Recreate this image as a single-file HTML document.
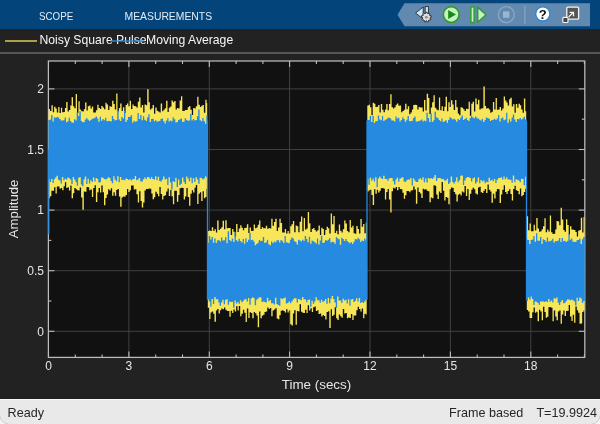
<!DOCTYPE html>
<html><head><meta charset="utf-8"><title>Scope</title>
<style>
html,body{margin:0;padding:0;background:#222;}
body{width:600px;height:424px;overflow:hidden;position:relative;font-family:"Liberation Sans",sans-serif;}
#tb{position:absolute;left:0;top:0;width:600px;height:29.5px;background:#03447a;}
#tb span{position:absolute;top:9px;font-size:12px;line-height:14px;color:#e3ebf3;letter-spacing:0px;}
#main{position:absolute;left:0;top:29px;width:600px;height:370px;background:#222222;}
#sb{position:absolute;left:0;top:399px;width:600px;height:25px;background:#e9e9e9;border-top:1px solid #f6f6f6;box-sizing:border-box;}
#sb span{position:absolute;top:6px;font-size:12.6px;line-height:15px;color:#262626;white-space:nowrap;}
svg{position:absolute;left:0;top:0;will-change:transform;}
#sb{will-change:transform;}
svg text{font-family:"Liberation Sans",sans-serif;}
</style></head><body>
<div id="tb"></div>
<div id="main"></div>
<div id="sb"><span style="left:7.6px">Ready</span><span style="left:449px">Frame based</span><span style="left:536.4px">T=19.9924</span></div>
<svg width="600" height="424" viewBox="0 0 600 424">
<text x="39" y="20.2" font-size="11.6" fill="#e6edf5" textLength="34.2" lengthAdjust="spacingAndGlyphs">SCOPE</text>
<text x="124.5" y="20.2" font-size="11.6" fill="#e6edf5" textLength="87.6" lengthAdjust="spacingAndGlyphs">MEASUREMENTS</text>
<!-- toolbar right group -->
<polygon points="397.5,14.7 404.5,3.3 590,3.3 590,26.2 404.5,26.2" fill="#628ab0"/>
<g id="ic1">
<polygon points="415.6,13 423.2,7 423.2,19" fill="#cde6fb" stroke="#2b2b2b" stroke-width="0.9" stroke-linejoin="round"/>
<rect x="425.2" y="6.6" width="3.2" height="8" fill="#cde6fb" stroke="#2b2b2b" stroke-width="0.9"/>
<path d="M425.64 12.26L427.16 12.26L427.17 13.58L428.14 13.93L428.99 12.92L430.16 13.91L429.32 14.92L429.83 15.81L431.13 15.59L431.40 17.10L430.10 17.33L429.92 18.34L431.06 19.01L430.30 20.33L429.15 19.68L428.36 20.34L428.81 21.58L427.37 22.10L426.91 20.86L425.89 20.86L425.43 22.10L423.99 21.58L424.44 20.34L423.65 19.68L422.50 20.33L421.74 19.01L422.88 18.34L422.70 17.33L421.40 17.10L421.67 15.59L422.97 15.81L423.48 14.92L422.64 13.91L423.81 12.92L424.66 13.93L425.63 13.58Z" fill="#f1f1f1" stroke="#2b2b2b" stroke-width="0.9" stroke-linejoin="round"/>
<circle cx="426.4" cy="17.2" r="1.5" fill="#8e8e8e"/>
<circle cx="426.4" cy="17.2" r="2.3" fill="none" stroke="#d0d0d0" stroke-width="0.8"/>
</g>
<g id="play">
<circle cx="451.2" cy="14.6" r="7.9" fill="#c9f0c3" stroke="#2d9c2d" stroke-width="1.7"/>
<polygon points="448.2,10.1 456,14.6 448.2,19.1" fill="#168a16"/>
</g>
<g id="step">
<rect x="470.9" y="6.9" width="3.2" height="15.6" fill="#c9f0c3" stroke="#2d9c2d" stroke-width="1.4"/>
<polygon points="477.7,7.1 486,14.7 477.7,22.3" fill="#c9f0c3" stroke="#2d9c2d" stroke-width="1.5" stroke-linejoin="round"/>
</g>
<g id="stop">
<circle cx="506.3" cy="14.6" r="8" fill="none" stroke="#8ca7c5" stroke-width="1.3"/>
<rect x="503" y="11.4" width="6.4" height="6.4" fill="#9db5cf"/>
</g>
<line x1="524.9" y1="5.5" x2="524.9" y2="24" stroke="#9aa9ba" stroke-width="1"/>
<g id="help">
<circle cx="542.8" cy="13.9" r="7.1" fill="#fff" stroke="#2b84d6" stroke-width="1.3"/>
<text x="542.8" y="18.7" text-anchor="middle" font-size="13" font-weight="bold" fill="#111" style="text-rendering:geometricPrecision">?</text>
</g>
<g id="undock">
<rect x="566.8" y="7.1" width="11.8" height="12.1" rx="1" fill="#555555" stroke="#f2f2f2" stroke-width="1.3"/>
<path d="M568.6 17 L573.2 12.4 M569.6 12.4 L573.5 12.4 L573.5 16.3" fill="none" stroke="#f5f5f5" stroke-width="1.3"/>
<rect x="562.8" y="17.3" width="5.2" height="5.2" rx="1" fill="#454545" stroke="#f2f2f2" stroke-width="1.2"/>
</g>
<!-- legend -->
<line x1="5" y1="41" x2="37" y2="41" stroke="#f8e65a" stroke-width="1.3"/>
<text x="39.5" y="44.4" font-size="12.2" fill="#f6f6f6">Noisy Square Pulse</text>
<text x="146" y="44.4" font-size="12.2" fill="#f6f6f6">Moving Average</text>
<line x1="110.5" y1="41" x2="144.5" y2="41" stroke="#2a8de2" stroke-width="1.3" opacity="0.9"/>
<line x1="0" y1="53" x2="600" y2="53" stroke="#8a8a8a" stroke-width="1"/>
<!-- axes -->
<rect x="48.4" y="61.0" width="536.4" height="296.4" fill="#111111"/>
<g stroke="#404040" stroke-width="1"><line x1="128.9" y1="61.0" x2="128.9" y2="357.4"/><line x1="209.3" y1="61.0" x2="209.3" y2="357.4"/><line x1="289.6" y1="61.0" x2="289.6" y2="357.4"/><line x1="370.0" y1="61.0" x2="370.0" y2="357.4"/><line x1="450.4" y1="61.0" x2="450.4" y2="357.4"/><line x1="530.8" y1="61.0" x2="530.8" y2="357.4"/><line x1="48.4" y1="331.3" x2="584.8" y2="331.3"/><line x1="48.4" y1="270.7" x2="584.8" y2="270.7"/><line x1="48.4" y1="210.1" x2="584.8" y2="210.1"/><line x1="48.4" y1="149.5" x2="584.8" y2="149.5"/><line x1="48.4" y1="88.9" x2="584.8" y2="88.9"/></g>
<rect x="48.4" y="61.0" width="536.4" height="296.4" fill="none" stroke="#bdbdbd" stroke-width="1.25"/>
<g stroke="#bdbdbd" stroke-width="1.1"><line x1="48.5" y1="357.4" x2="48.5" y2="351.4"/><line x1="48.5" y1="61.0" x2="48.5" y2="67.0"/><line x1="75.3" y1="357.4" x2="75.3" y2="354.4"/><line x1="75.3" y1="61.0" x2="75.3" y2="64.0"/><line x1="102.1" y1="357.4" x2="102.1" y2="354.4"/><line x1="102.1" y1="61.0" x2="102.1" y2="64.0"/><line x1="128.9" y1="357.4" x2="128.9" y2="351.4"/><line x1="128.9" y1="61.0" x2="128.9" y2="67.0"/><line x1="155.7" y1="357.4" x2="155.7" y2="354.4"/><line x1="155.7" y1="61.0" x2="155.7" y2="64.0"/><line x1="182.5" y1="357.4" x2="182.5" y2="354.4"/><line x1="182.5" y1="61.0" x2="182.5" y2="64.0"/><line x1="209.3" y1="357.4" x2="209.3" y2="351.4"/><line x1="209.3" y1="61.0" x2="209.3" y2="67.0"/><line x1="236.1" y1="357.4" x2="236.1" y2="354.4"/><line x1="236.1" y1="61.0" x2="236.1" y2="64.0"/><line x1="262.9" y1="357.4" x2="262.9" y2="354.4"/><line x1="262.9" y1="61.0" x2="262.9" y2="64.0"/><line x1="289.6" y1="357.4" x2="289.6" y2="351.4"/><line x1="289.6" y1="61.0" x2="289.6" y2="67.0"/><line x1="316.4" y1="357.4" x2="316.4" y2="354.4"/><line x1="316.4" y1="61.0" x2="316.4" y2="64.0"/><line x1="343.2" y1="357.4" x2="343.2" y2="354.4"/><line x1="343.2" y1="61.0" x2="343.2" y2="64.0"/><line x1="370.0" y1="357.4" x2="370.0" y2="351.4"/><line x1="370.0" y1="61.0" x2="370.0" y2="67.0"/><line x1="396.8" y1="357.4" x2="396.8" y2="354.4"/><line x1="396.8" y1="61.0" x2="396.8" y2="64.0"/><line x1="423.6" y1="357.4" x2="423.6" y2="354.4"/><line x1="423.6" y1="61.0" x2="423.6" y2="64.0"/><line x1="450.4" y1="357.4" x2="450.4" y2="351.4"/><line x1="450.4" y1="61.0" x2="450.4" y2="67.0"/><line x1="477.2" y1="357.4" x2="477.2" y2="354.4"/><line x1="477.2" y1="61.0" x2="477.2" y2="64.0"/><line x1="504.0" y1="357.4" x2="504.0" y2="354.4"/><line x1="504.0" y1="61.0" x2="504.0" y2="64.0"/><line x1="530.8" y1="357.4" x2="530.8" y2="351.4"/><line x1="530.8" y1="61.0" x2="530.8" y2="67.0"/><line x1="557.6" y1="357.4" x2="557.6" y2="354.4"/><line x1="557.6" y1="61.0" x2="557.6" y2="64.0"/><line x1="584.4" y1="357.4" x2="584.4" y2="354.4"/><line x1="584.4" y1="61.0" x2="584.4" y2="64.0"/><line x1="48.4" y1="331.3" x2="54.4" y2="331.3"/><line x1="584.8" y1="331.3" x2="578.8" y2="331.3"/><line x1="48.4" y1="301.0" x2="51.4" y2="301.0"/><line x1="584.8" y1="301.0" x2="581.8" y2="301.0"/><line x1="48.4" y1="270.7" x2="54.4" y2="270.7"/><line x1="584.8" y1="270.7" x2="578.8" y2="270.7"/><line x1="48.4" y1="240.4" x2="51.4" y2="240.4"/><line x1="584.8" y1="240.4" x2="581.8" y2="240.4"/><line x1="48.4" y1="210.1" x2="54.4" y2="210.1"/><line x1="584.8" y1="210.1" x2="578.8" y2="210.1"/><line x1="48.4" y1="179.8" x2="51.4" y2="179.8"/><line x1="584.8" y1="179.8" x2="581.8" y2="179.8"/><line x1="48.4" y1="149.5" x2="54.4" y2="149.5"/><line x1="584.8" y1="149.5" x2="578.8" y2="149.5"/><line x1="48.4" y1="119.2" x2="51.4" y2="119.2"/><line x1="584.8" y1="119.2" x2="581.8" y2="119.2"/><line x1="48.4" y1="88.9" x2="54.4" y2="88.9"/><line x1="584.8" y1="88.9" x2="578.8" y2="88.9"/></g>
<path d="M48.7 149.5L48.7 109.0L50.0 109.0L50.0 111.0L51.4 111.0L51.4 105.3L52.8 105.3L52.8 112.3L54.1 112.3L54.1 106.7L55.5 106.7L55.5 108.6L56.8 108.6L56.8 112.6L58.2 112.6L58.2 107.0L59.5 107.0L59.5 113.1L60.9 113.1L60.9 107.8L62.2 107.8L62.2 112.3L63.6 112.3L63.6 111.9L64.9 111.9L64.9 107.9L66.2 107.9L66.2 102.1L67.6 102.1L67.6 111.4L68.9 111.4L68.9 110.1L70.3 110.1L70.3 105.6L71.6 105.6L71.6 97.2L73.0 97.2L73.0 106.2L74.3 106.2L74.3 108.2L75.7 108.2L75.7 94.1L77.0 94.1L77.0 112.9L78.4 112.9L78.4 101.2L79.7 101.2L79.7 109.4L81.1 109.4L81.1 111.1L82.4 111.1L82.4 111.5L83.8 111.5L83.8 109.2L85.1 109.2L85.1 102.4L86.5 102.4L86.5 110.6L87.8 110.6L87.8 106.2L89.2 106.2L89.2 105.4L90.5 105.4L90.5 108.5L91.9 108.5L91.9 106.6L93.2 106.6L93.2 112.5L94.6 112.5L94.6 112.6L95.9 112.6L95.9 110.3L97.3 110.3L97.3 104.8L98.6 104.8L98.6 107.9L100.0 107.9L100.0 109.1L101.3 109.1L101.3 106.1L102.7 106.1L102.7 107.6L104.0 107.6L104.0 109.3L105.4 109.3L105.4 102.8L106.7 102.8L106.7 104.6L108.1 104.6L108.1 109.9L109.4 109.9L109.4 106.2L110.8 106.2L110.8 106.8L112.1 106.8L112.1 100.7L113.5 100.7L113.5 104.1L114.8 104.1L114.8 109.4L116.2 109.4L116.2 93.4L117.5 93.4L117.5 111.5L118.9 111.5L118.9 108.0L120.2 108.0L120.2 103.6L121.6 103.6L121.6 111.0L122.9 111.0L122.9 107.2L124.3 107.2L124.3 113.1L125.6 113.1L125.6 105.0L127.0 105.0L127.0 103.4L128.3 103.4L128.3 106.3L129.7 106.3L129.7 100.7L131.0 100.7L131.0 109.1L132.4 109.1L132.4 104.6L133.7 104.6L133.7 106.0L135.1 106.0L135.1 106.2L136.4 106.2L136.4 107.6L137.8 107.6L137.8 101.8L139.1 101.8L139.1 97.4L140.5 97.4L140.5 107.4L141.8 107.4L141.8 105.1L143.2 105.1L143.2 112.5L144.5 112.5L144.5 104.5L145.9 104.5L145.9 105.3L147.2 105.3L147.2 89.3L148.6 89.3L148.6 102.2L149.9 102.2L149.9 109.4L151.3 109.4L151.3 108.3L152.6 108.3L152.6 105.0L154.0 105.0L154.0 113.7L155.3 113.7L155.3 107.5L156.7 107.5L156.7 110.8L158.0 110.8L158.0 111.5L159.4 111.5L159.4 112.6L160.7 112.6L160.7 103.4L162.1 103.4L162.1 111.3L163.4 111.3L163.4 109.8L164.8 109.8L164.8 108.3L166.1 108.3L166.1 100.8L167.5 100.8L167.5 112.1L168.8 112.1L168.8 107.7L170.2 107.7L170.2 106.5L171.5 106.5L171.5 100.4L172.9 100.4L172.9 102.3L174.2 102.3L174.2 101.1L175.6 101.1L175.6 109.5L176.9 109.5L176.9 108.0L178.3 108.0L178.3 108.6L179.6 108.6L179.6 100.4L181.0 100.4L181.0 96.3L182.3 96.3L182.3 111.0L183.7 111.0L183.7 110.7L185.0 110.7L185.0 110.0L186.4 110.0L186.4 110.0L187.7 110.0L187.7 107.3L189.1 107.3L189.1 106.1L190.4 106.1L190.4 109.7L191.8 109.7L191.8 115.1L193.1 115.1L193.1 108.0L194.5 108.0L194.5 108.5L195.8 108.5L195.8 106.3L197.2 106.3L197.2 96.8L198.5 96.8L198.5 104.7L199.9 104.7L199.9 106.9L201.2 106.9L201.2 105.7L202.6 105.7L202.6 104.9L203.9 104.9L203.9 112.7L205.3 112.7L205.3 99.8L206.6 99.8L206.6 103.1L207.2 103.1L207.2 149.5L207.2 188.8L206.6 188.8L206.6 196.9L205.3 196.9L205.3 198.2L203.9 198.2L203.9 191.2L202.6 191.2L202.6 200.9L201.2 200.9L201.2 192.2L199.9 192.2L199.9 193.7L198.5 193.7L198.5 204.1L197.2 204.1L197.2 184.9L195.8 184.9L195.8 187.7L194.5 187.7L194.5 192.4L193.1 192.4L193.1 190.3L191.8 190.3L191.8 193.8L190.4 193.8L190.4 205.7L189.1 205.7L189.1 196.9L187.7 196.9L187.7 187.9L186.4 187.9L186.4 196.4L185.0 196.4L185.0 199.4L183.7 199.4L183.7 188.0L182.3 188.0L182.3 187.7L181.0 187.7L181.0 188.2L179.6 188.2L179.6 194.9L178.3 194.9L178.3 201.7L176.9 201.7L176.9 190.8L175.6 190.8L175.6 190.8L174.2 190.8L174.2 204.2L172.9 204.2L172.9 196.3L171.5 196.3L171.5 190.1L170.2 190.1L170.2 196.1L168.8 196.1L168.8 188.4L167.5 188.4L167.5 191.6L166.1 191.6L166.1 195.3L164.8 195.3L164.8 195.9L163.4 195.9L163.4 199.6L162.1 199.6L162.1 193.9L160.7 193.9L160.7 187.0L159.4 187.0L159.4 196.3L158.0 196.3L158.0 193.8L156.7 193.8L156.7 191.7L155.3 191.7L155.3 197.3L154.0 197.3L154.0 199.2L152.6 199.2L152.6 193.4L151.3 193.4L151.3 188.7L149.9 188.7L149.9 188.6L148.6 188.6L148.6 188.9L147.2 188.9L147.2 188.9L145.9 188.9L145.9 190.4L144.5 190.4L144.5 202.4L143.2 202.4L143.2 207.6L141.8 207.6L141.8 201.1L140.5 201.1L140.5 191.3L139.1 191.3L139.1 202.5L137.8 202.5L137.8 194.3L136.4 194.3L136.4 189.3L135.1 189.3L135.1 189.5L133.7 189.5L133.7 185.5L132.4 185.5L132.4 185.6L131.0 185.6L131.0 190.3L129.7 190.3L129.7 192.1L128.3 192.1L128.3 188.9L127.0 188.9L127.0 195.1L125.6 195.1L125.6 196.7L124.3 196.7L124.3 196.4L122.9 196.4L122.9 197.6L121.6 197.6L121.6 206.7L120.2 206.7L120.2 196.5L118.9 196.5L118.9 188.9L117.5 188.9L117.5 190.1L116.2 190.1L116.2 195.8L114.8 195.8L114.8 192.3L113.5 192.3L113.5 195.7L112.1 195.7L112.1 188.2L110.8 188.2L110.8 190.5L109.4 190.5L109.4 189.3L108.1 189.3L108.1 194.4L106.7 194.4L106.7 197.9L105.4 197.9L105.4 205.3L104.0 205.3L104.0 192.2L102.7 192.2L102.7 185.5L101.3 185.5L101.3 192.4L100.0 192.4L100.0 187.9L98.6 187.9L98.6 192.2L97.3 192.2L97.3 202.1L95.9 202.1L95.9 185.3L94.6 185.3L94.6 188.1L93.2 188.1L93.2 197.0L91.9 197.0L91.9 189.4L90.5 189.4L90.5 190.2L89.2 190.2L89.2 187.3L87.8 187.3L87.8 187.0L86.5 187.0L86.5 191.7L85.1 191.7L85.1 191.5L83.8 191.5L83.8 209.8L82.4 209.8L82.4 197.5L81.1 197.5L81.1 187.6L79.7 187.6L79.7 190.4L78.4 190.4L78.4 190.2L77.0 190.2L77.0 189.2L75.7 189.2L75.7 188.0L74.3 188.0L74.3 193.3L73.0 193.3L73.0 198.3L71.6 198.3L71.6 185.4L70.3 185.4L70.3 190.4L68.9 190.4L68.9 187.3L67.6 187.3L67.6 188.0L66.2 188.0L66.2 182.2L64.9 182.2L64.9 186.3L63.6 186.3L63.6 190.2L62.2 190.2L62.2 188.1L60.9 188.1L60.9 188.7L59.5 188.7L59.5 186.6L58.2 186.6L58.2 186.5L56.8 186.5L56.8 193.5L55.5 193.5L55.5 187.3L54.1 187.3L54.1 190.8L52.8 190.8L52.8 190.7L51.4 190.7L51.4 196.2L50.0 196.2L50.0 198.3L48.7 198.3ZM207.8 270.7L207.8 231.0L209.2 231.0L209.2 230.5L210.5 230.5L210.5 231.1L211.8 231.1L211.8 227.3L213.2 227.3L213.2 230.9L214.5 230.9L214.5 229.2L215.9 229.2L215.9 232.5L217.2 232.5L217.2 220.6L218.6 220.6L218.6 229.9L219.9 229.9L219.9 228.8L221.3 228.8L221.3 227.3L222.6 227.3L222.6 220.8L224.0 220.8L224.0 229.2L225.3 229.2L225.3 220.2L226.7 220.2L226.7 228.3L228.0 228.3L228.0 228.0L229.4 228.0L229.4 228.0L230.7 228.0L230.7 235.1L232.1 235.1L232.1 229.0L233.4 229.0L233.4 231.8L234.8 231.8L234.8 236.4L236.1 236.4L236.1 223.9L237.5 223.9L237.5 231.9L238.8 231.9L238.8 228.6L240.2 228.6L240.2 225.3L241.5 225.3L241.5 227.7L242.9 227.7L242.9 230.2L244.2 230.2L244.2 228.1L245.6 228.1L245.6 227.7L246.9 227.7L246.9 224.2L248.3 224.2L248.3 232.9L249.6 232.9L249.6 227.6L251.0 227.6L251.0 231.0L252.3 231.0L252.3 230.7L253.7 230.7L253.7 224.5L255.0 224.5L255.0 228.2L256.4 228.2L256.4 227.6L257.7 227.6L257.7 224.7L259.1 224.7L259.1 220.5L260.4 220.5L260.4 228.9L261.8 228.9L261.8 227.0L263.1 227.0L263.1 228.3L264.5 228.3L264.5 228.2L265.8 228.2L265.8 225.8L267.2 225.8L267.2 228.8L268.6 228.8L268.6 227.9L269.9 227.9L269.9 228.6L271.3 228.6L271.3 218.8L272.6 218.8L272.6 225.7L274.0 225.7L274.0 221.9L275.3 221.9L275.3 218.8L276.7 218.8L276.7 230.9L278.0 230.9L278.0 227.6L279.4 227.6L279.4 218.7L280.7 218.7L280.7 223.0L282.1 223.0L282.1 232.4L283.4 232.4L283.4 232.6L284.8 232.6L284.8 228.9L286.1 228.9L286.1 233.5L287.5 233.5L287.5 231.1L288.8 231.1L288.8 233.5L290.2 233.5L290.2 226.2L291.5 226.2L291.5 224.3L292.9 224.3L292.9 221.1L294.2 221.1L294.2 232.2L295.6 232.2L295.6 225.5L296.9 225.5L296.9 226.3L298.3 226.3L298.3 232.3L299.6 232.3L299.6 221.7L301.0 221.7L301.0 216.5L302.3 216.5L302.3 231.3L303.7 231.3L303.7 218.0L305.0 218.0L305.0 229.4L306.4 229.4L306.4 228.5L307.7 228.5L307.7 211.9L309.1 211.9L309.1 223.2L310.4 223.2L310.4 232.1L311.8 232.1L311.8 229.1L313.1 229.1L313.1 228.1L314.5 228.1L314.5 230.0L315.8 230.0L315.8 231.6L317.2 231.6L317.2 230.3L318.5 230.3L318.5 225.4L319.9 225.4L319.9 235.1L321.2 235.1L321.2 227.7L322.6 227.7L322.6 229.0L323.9 229.0L323.9 235.1L325.3 235.1L325.3 230.1L326.6 230.1L326.6 226.8L328.0 226.8L328.0 228.2L329.3 228.2L329.3 233.6L330.7 233.6L330.7 213.5L332.0 213.5L332.0 224.2L333.4 224.2L333.4 216.0L334.7 216.0L334.7 232.9L336.1 232.9L336.1 230.8L337.4 230.8L337.4 234.3L338.8 234.3L338.8 224.4L340.1 224.4L340.1 230.8L341.5 230.8L341.5 232.5L342.8 232.5L342.8 229.2L344.2 229.2L344.2 220.5L345.5 220.5L345.5 223.5L346.9 223.5L346.9 230.9L348.2 230.9L348.2 232.2L349.6 232.2L349.6 220.1L350.9 220.1L350.9 227.5L352.3 227.5L352.3 225.7L353.6 225.7L353.6 233.2L355.0 233.2L355.0 233.8L356.3 233.8L356.3 225.9L357.7 225.9L357.7 229.1L359.0 229.1L359.0 233.5L360.4 233.5L360.4 219.1L361.7 219.1L361.7 226.7L363.1 226.7L363.1 223.9L364.4 223.9L364.4 233.3L365.8 233.3L365.8 222.5L366.7 222.5L366.7 270.7L366.7 314.6L365.8 314.6L365.8 313.8L364.4 313.8L364.4 318.3L363.1 318.3L363.1 308.5L361.7 308.5L361.7 311.6L360.4 311.6L360.4 308.9L359.0 308.9L359.0 306.8L357.7 306.8L357.7 310.2L356.3 310.2L356.3 315.6L355.0 315.6L355.0 315.4L353.6 315.4L353.6 320.1L352.3 320.1L352.3 314.1L350.9 314.1L350.9 318.1L349.6 318.1L349.6 317.6L348.2 317.6L348.2 318.3L346.9 318.3L346.9 313.1L345.5 313.1L345.5 313.4L344.2 313.4L344.2 309.0L342.8 309.0L342.8 317.8L341.5 317.8L341.5 316.2L340.1 316.2L340.1 314.6L338.8 314.6L338.8 320.1L337.4 320.1L337.4 318.3L336.1 318.3L336.1 307.2L334.7 307.2L334.7 314.8L333.4 314.8L333.4 316.1L332.0 316.1L332.0 309.2L330.7 309.2L330.7 327.9L329.3 327.9L329.3 311.2L328.0 311.2L328.0 311.9L326.6 311.9L326.6 319.6L325.3 319.6L325.3 315.9L323.9 315.9L323.9 315.0L322.6 315.0L322.6 316.5L321.2 316.5L321.2 313.4L319.9 313.4L319.9 314.1L318.5 314.1L318.5 310.2L317.2 310.2L317.2 311.0L315.8 311.0L315.8 306.5L314.5 306.5L314.5 307.2L313.1 307.2L313.1 312.0L311.8 312.0L311.8 308.3L310.4 308.3L310.4 310.6L309.1 310.6L309.1 305.2L307.7 305.2L307.7 313.1L306.4 313.1L306.4 309.8L305.0 309.8L305.0 313.1L303.7 313.1L303.7 312.8L302.3 312.8L302.3 311.8L301.0 311.8L301.0 304.2L299.6 304.2L299.6 311.5L298.3 311.5L298.3 311.0L296.9 311.0L296.9 324.7L295.6 324.7L295.6 310.3L294.2 310.3L294.2 313.6L292.9 313.6L292.9 325.6L291.5 325.6L291.5 324.3L290.2 324.3L290.2 310.5L288.8 310.5L288.8 312.5L287.5 312.5L287.5 309.3L286.1 309.3L286.1 312.6L284.8 312.6L284.8 310.9L283.4 310.9L283.4 310.3L282.1 310.3L282.1 310.8L280.7 310.8L280.7 315.2L279.4 315.2L279.4 319.3L278.0 319.3L278.0 318.5L276.7 318.5L276.7 308.2L275.3 308.2L275.3 309.4L274.0 309.4L274.0 310.5L272.6 310.5L272.6 316.3L271.3 316.3L271.3 307.9L269.9 307.9L269.9 308.9L268.6 308.9L268.6 307.5L267.2 307.5L267.2 311.5L265.8 311.5L265.8 312.1L264.5 312.1L264.5 314.7L263.1 314.7L263.1 315.8L261.8 315.8L261.8 318.2L260.4 318.2L260.4 311.4L259.1 311.4L259.1 327.3L257.7 327.3L257.7 315.5L256.4 315.5L256.4 313.2L255.0 313.2L255.0 311.9L253.7 311.9L253.7 318.3L252.3 318.3L252.3 313.0L251.0 313.0L251.0 312.3L249.6 312.3L249.6 317.9L248.3 317.9L248.3 308.5L246.9 308.5L246.9 322.1L245.6 322.1L245.6 312.8L244.2 312.8L244.2 309.7L242.9 309.7L242.9 313.7L241.5 313.7L241.5 316.2L240.2 316.2L240.2 306.1L238.8 306.1L238.8 310.4L237.5 310.4L237.5 306.3L236.1 306.3L236.1 311.4L234.8 311.4L234.8 309.5L233.4 309.5L233.4 313.1L232.1 313.1L232.1 310.8L230.7 310.8L230.7 316.7L229.4 316.7L229.4 311.0L228.0 311.0L228.0 311.1L226.7 311.1L226.7 309.8L225.3 309.8L225.3 307.4L224.0 307.4L224.0 309.3L222.6 309.3L222.6 308.6L221.3 308.6L221.3 310.3L219.9 310.3L219.9 313.4L218.6 313.4L218.6 308.9L217.2 308.9L217.2 310.6L215.9 310.6L215.9 321.7L214.5 321.7L214.5 313.7L213.2 313.7L213.2 311.4L211.8 311.4L211.8 312.6L210.5 312.6L210.5 319.1L209.2 319.1L209.2 307.8L207.8 307.8ZM367.3 149.5L367.3 105.6L368.7 105.6L368.7 104.8L370.0 104.8L370.0 107.2L371.4 107.2L371.4 115.3L372.7 115.3L372.7 102.8L374.1 102.8L374.1 103.7L375.4 103.7L375.4 107.1L376.8 107.1L376.8 106.7L378.1 106.7L378.1 105.1L379.5 105.1L379.5 112.4L380.8 112.4L380.8 103.9L382.2 103.9L382.2 109.8L383.5 109.8L383.5 112.2L384.9 112.2L384.9 109.6L386.2 109.6L386.2 104.1L387.6 104.1L387.6 110.3L388.9 110.3L388.9 103.9L390.3 103.9L390.3 94.2L391.6 94.2L391.6 107.2L393.0 107.2L393.0 108.4L394.3 108.4L394.3 107.3L395.7 107.3L395.7 104.8L397.0 104.8L397.0 103.4L398.4 103.4L398.4 105.7L399.7 105.7L399.7 105.4L401.1 105.4L401.1 112.2L402.4 112.2L402.4 111.1L403.8 111.1L403.8 109.8L405.1 109.8L405.1 103.8L406.5 103.8L406.5 109.2L407.8 109.2L407.8 106.3L409.2 106.3L409.2 114.3L410.5 114.3L410.5 112.5L411.9 112.5L411.9 109.6L413.2 109.6L413.2 105.0L414.6 105.0L414.6 104.7L415.9 104.7L415.9 104.9L417.3 104.9L417.3 109.4L418.6 109.4L418.6 106.9L420.0 106.9L420.0 107.5L421.3 107.5L421.3 107.5L422.7 107.5L422.7 111.5L424.0 111.5L424.0 100.1L425.4 100.1L425.4 110.4L426.7 110.4L426.7 93.8L428.1 93.8L428.1 98.0L429.4 98.0L429.4 114.0L430.8 114.0L430.8 107.6L432.1 107.6L432.1 102.3L433.5 102.3L433.5 95.2L434.8 95.2L434.8 107.7L436.2 107.7L436.2 109.6L437.5 109.6L437.5 110.3L438.9 110.3L438.9 97.4L440.2 97.4L440.2 110.3L441.6 110.3L441.6 106.2L442.9 106.2L442.9 111.1L444.3 111.1L444.3 106.8L445.6 106.8L445.6 96.8L447.0 96.8L447.0 111.3L448.3 111.3L448.3 102.3L449.7 102.3L449.7 107.0L451.0 107.0L451.0 100.3L452.4 100.3L452.4 104.5L453.7 104.5L453.7 110.0L455.1 110.0L455.1 99.9L456.4 99.9L456.4 107.3L457.8 107.3L457.8 113.6L459.1 113.6L459.1 115.2L460.5 115.2L460.5 107.2L461.8 107.2L461.8 107.7L463.2 107.7L463.2 109.2L464.5 109.2L464.5 111.1L465.9 111.1L465.9 108.8L467.2 108.8L467.2 109.1L468.6 109.1L468.6 101.8L469.9 101.8L469.9 115.7L471.3 115.7L471.3 103.7L472.6 103.7L472.6 101.8L474.0 101.8L474.0 111.4L475.3 111.4L475.3 98.6L476.7 98.6L476.7 104.3L478.0 104.3L478.0 99.7L479.4 99.7L479.4 109.4L480.7 109.4L480.7 108.5L482.1 108.5L482.1 108.3L483.4 108.3L483.4 86.5L484.8 86.5L484.8 106.1L486.1 106.1L486.1 108.6L487.5 108.6L487.5 107.9L488.8 107.9L488.8 109.5L490.2 109.5L490.2 112.8L491.5 112.8L491.5 111.7L492.9 111.7L492.9 101.9L494.2 101.9L494.2 109.4L495.6 109.4L495.6 98.0L496.9 98.0L496.9 109.8L498.3 109.8L498.3 109.6L499.6 109.6L499.6 107.0L501.0 107.0L501.0 110.5L502.3 110.5L502.3 108.5L503.7 108.5L503.7 96.5L505.0 96.5L505.0 100.4L506.4 100.4L506.4 102.5L507.7 102.5L507.7 105.5L509.1 105.5L509.1 99.2L510.4 99.2L510.4 97.7L511.8 97.7L511.8 106.5L513.1 106.5L513.1 104.2L514.5 104.2L514.5 112.8L515.8 112.8L515.8 104.0L517.2 104.0L517.2 107.7L518.5 107.7L518.5 103.7L519.9 103.7L519.9 105.3L521.2 105.3L521.2 109.4L522.6 109.4L522.6 112.8L523.9 112.8L523.9 98.5L525.3 98.5L525.3 111.3L526.2 111.3L526.2 149.5L526.2 188.7L525.3 188.7L525.3 191.9L523.9 191.9L523.9 195.1L522.6 195.1L522.6 196.2L521.2 196.2L521.2 188.6L519.9 188.6L519.9 194.2L518.5 194.2L518.5 191.0L517.2 191.0L517.2 190.2L515.8 190.2L515.8 185.7L514.5 185.7L514.5 188.9L513.1 188.9L513.1 200.4L511.8 200.4L511.8 194.0L510.4 194.0L510.4 189.3L509.1 189.3L509.1 191.0L507.7 191.0L507.7 194.1L506.4 194.1L506.4 191.9L505.0 191.9L505.0 185.3L503.7 185.3L503.7 189.8L502.3 189.8L502.3 194.5L501.0 194.5L501.0 202.9L499.6 202.9L499.6 189.2L498.3 189.2L498.3 189.0L496.9 189.0L496.9 191.6L495.6 191.6L495.6 198.6L494.2 198.6L494.2 193.7L492.9 193.7L492.9 202.8L491.5 202.8L491.5 191.5L490.2 191.5L490.2 189.8L488.8 189.8L488.8 184.6L487.5 184.6L487.5 193.1L486.1 193.1L486.1 188.9L484.8 188.9L484.8 190.7L483.4 190.7L483.4 192.9L482.1 192.9L482.1 192.2L480.7 192.2L480.7 186.7L479.4 186.7L479.4 187.4L478.0 187.4L478.0 194.4L476.7 194.4L476.7 193.5L475.3 193.5L475.3 189.2L474.0 189.2L474.0 187.7L472.6 187.7L472.6 189.8L471.3 189.8L471.3 193.7L469.9 193.7L469.9 200.1L468.6 200.1L468.6 189.0L467.2 189.0L467.2 195.9L465.9 195.9L465.9 185.9L464.5 185.9L464.5 192.5L463.2 192.5L463.2 191.4L461.8 191.4L461.8 195.6L460.5 195.6L460.5 193.7L459.1 193.7L459.1 194.8L457.8 194.8L457.8 201.4L456.4 201.4L456.4 194.2L455.1 194.2L455.1 192.1L453.7 192.1L453.7 188.0L452.4 188.0L452.4 187.4L451.0 187.4L451.0 189.2L449.7 189.2L449.7 204.3L448.3 204.3L448.3 197.7L447.0 197.7L447.0 196.9L445.6 196.9L445.6 200.5L444.3 200.5L444.3 190.7L442.9 190.7L442.9 182.1L441.6 182.1L441.6 192.9L440.2 192.9L440.2 191.6L438.9 191.6L438.9 199.0L437.5 199.0L437.5 194.6L436.2 194.6L436.2 185.7L434.8 185.7L434.8 185.3L433.5 185.3L433.5 198.2L432.1 198.2L432.1 197.5L430.8 197.5L430.8 202.3L429.4 202.3L429.4 191.3L428.1 191.3L428.1 190.8L426.7 190.8L426.7 189.2L425.4 189.2L425.4 189.4L424.0 189.4L424.0 188.8L422.7 188.8L422.7 197.9L421.3 197.9L421.3 193.5L420.0 193.5L420.0 191.9L418.6 191.9L418.6 187.6L417.3 187.6L417.3 203.7L415.9 203.7L415.9 189.5L414.6 189.5L414.6 186.5L413.2 186.5L413.2 190.2L411.9 190.2L411.9 190.6L410.5 190.6L410.5 192.2L409.2 192.2L409.2 191.0L407.8 191.0L407.8 190.9L406.5 190.9L406.5 195.3L405.1 195.3L405.1 198.7L403.8 198.7L403.8 192.7L402.4 192.7L402.4 189.3L401.1 189.3L401.1 189.1L399.7 189.1L399.7 187.1L398.4 187.1L398.4 190.2L397.0 190.2L397.0 187.1L395.7 187.1L395.7 188.5L394.3 188.5L394.3 187.8L393.0 187.8L393.0 191.3L391.6 191.3L391.6 212.4L390.3 212.4L390.3 199.5L388.9 199.5L388.9 188.9L387.6 188.9L387.6 191.9L386.2 191.9L386.2 199.4L384.9 199.4L384.9 188.7L383.5 188.7L383.5 188.1L382.2 188.1L382.2 188.2L380.8 188.2L380.8 190.7L379.5 190.7L379.5 192.5L378.1 192.5L378.1 189.8L376.8 189.8L376.8 193.8L375.4 193.8L375.4 189.3L374.1 189.3L374.1 204.9L372.7 204.9L372.7 195.1L371.4 195.1L371.4 189.7L370.0 189.7L370.0 190.2L368.7 190.2L368.7 191.6L367.3 191.6ZM526.8 270.7L526.8 216.2L528.1 216.2L528.1 230.3L529.5 230.3L529.5 223.5L530.9 223.5L530.9 231.2L532.2 231.2L532.2 231.3L533.6 231.3L533.6 224.7L534.9 224.7L534.9 230.5L536.3 230.5L536.3 218.1L537.6 218.1L537.6 228.4L539.0 228.4L539.0 231.7L540.3 231.7L540.3 231.3L541.7 231.3L541.7 229.2L543.0 229.2L543.0 226.3L544.4 226.3L544.4 218.3L545.7 218.3L545.7 232.3L547.1 232.3L547.1 229.5L548.4 229.5L548.4 231.4L549.8 231.4L549.8 215.6L551.1 215.6L551.1 232.3L552.5 232.3L552.5 233.9L553.8 233.9L553.8 233.7L555.2 233.7L555.2 229.5L556.5 229.5L556.5 221.1L557.9 221.1L557.9 221.6L559.2 221.6L559.2 225.2L560.6 225.2L560.6 207.7L561.9 207.7L561.9 219.5L563.3 219.5L563.3 230.1L564.6 230.1L564.6 231.8L566.0 231.8L566.0 219.2L567.3 219.2L567.3 225.0L568.7 225.0L568.7 234.5L570.0 234.5L570.0 226.3L571.4 226.3L571.4 229.6L572.7 229.6L572.7 229.7L574.1 229.7L574.1 230.1L575.4 230.1L575.4 232.0L576.8 232.0L576.8 236.6L578.1 236.6L578.1 230.7L579.5 230.7L579.5 229.9L580.8 229.9L580.8 217.8L582.2 217.8L582.2 232.6L583.5 232.6L583.5 216.9L584.5 216.9L584.5 270.7L584.5 310.4L583.5 310.4L583.5 311.9L582.2 311.9L582.2 323.5L580.8 323.5L580.8 323.8L579.5 323.8L579.5 312.8L578.1 312.8L578.1 310.2L576.8 310.2L576.8 306.6L575.4 306.6L575.4 322.7L574.1 322.7L574.1 314.7L572.7 314.7L572.7 321.1L571.4 321.1L571.4 316.6L570.0 316.6L570.0 305.0L568.7 305.0L568.7 310.7L567.3 310.7L567.3 311.1L566.0 311.1L566.0 315.9L564.6 315.9L564.6 310.5L563.3 310.5L563.3 314.5L561.9 314.5L561.9 323.8L560.6 323.8L560.6 310.6L559.2 310.6L559.2 311.4L557.9 311.4L557.9 320.3L556.5 320.3L556.5 316.4L555.2 316.4L555.2 310.5L553.8 310.5L553.8 321.3L552.5 321.3L552.5 307.7L551.1 307.7L551.1 307.0L549.8 307.0L549.8 307.2L548.4 307.2L548.4 316.8L547.1 316.8L547.1 317.7L545.7 317.7L545.7 312.1L544.4 312.1L544.4 306.8L543.0 306.8L543.0 320.3L541.7 320.3L541.7 311.6L540.3 311.6L540.3 309.7L539.0 309.7L539.0 321.3L537.6 321.3L537.6 311.7L536.3 311.7L536.3 312.8L534.9 312.8L534.9 307.4L533.6 307.4L533.6 312.3L532.2 312.3L532.2 318.0L530.9 318.0L530.9 318.0L529.5 318.0L529.5 311.5L528.1 311.5L528.1 309.9L526.8 309.9Z" fill="#f8e65a"/>
<path d="M48.4 149.5L48.4 119.9L49.8 119.9L49.8 119.6L51.1 119.6L51.1 114.9L52.5 114.9L52.5 121.4L53.8 121.4L53.8 117.2L55.2 117.2L55.2 117.8L56.5 117.8L56.5 116.9L57.9 116.9L57.9 117.5L59.2 117.5L59.2 118.9L60.6 118.9L60.6 120.5L61.9 120.5L61.9 120.6L63.3 120.6L63.3 120.3L64.6 120.3L64.6 117.4L66.0 117.4L66.0 122.2L67.3 122.2L67.3 121.3L68.6 121.3L68.6 117.7L70.0 117.7L70.0 121.0L71.3 121.0L71.3 122.4L72.7 122.4L72.7 122.8L74.0 122.8L74.0 119.2L75.4 119.2L75.4 120.5L76.7 120.5L76.7 112.2L78.1 112.2L78.1 116.0L79.4 116.0L79.4 111.2L80.8 111.2L80.8 120.9L82.1 120.9L82.1 122.2L83.5 122.2L83.5 122.0L84.8 122.0L84.8 119.5L86.2 119.5L86.2 118.1L87.5 118.1L87.5 119.8L88.9 119.8L88.9 121.1L90.2 121.1L90.2 120.0L91.6 120.0L91.6 118.8L92.9 118.8L92.9 118.4L94.3 118.4L94.3 117.7L95.6 117.7L95.6 116.6L97.0 116.6L97.0 118.4L98.3 118.4L98.3 121.8L99.7 121.8L99.7 116.7L101.0 116.7L101.0 120.7L102.4 120.7L102.4 119.1L103.7 119.1L103.7 120.3L105.1 120.3L105.1 117.8L106.4 117.8L106.4 121.3L107.8 121.3L107.8 121.0L109.1 121.0L109.1 121.0L110.5 121.0L110.5 121.6L111.8 121.6L111.8 116.0L113.2 116.0L113.2 119.1L114.5 119.1L114.5 120.5L115.9 120.5L115.9 120.1L117.2 120.1L117.2 110.2L118.6 110.2L118.6 119.5L119.9 119.5L119.9 121.1L121.3 121.1L121.3 117.1L122.6 117.1L122.6 118.5L124.0 118.5L124.0 110.6L125.3 110.6L125.3 122.0L126.7 122.0L126.7 119.7L128.0 119.7L128.0 117.0L129.4 117.0L129.4 116.7L130.7 116.7L130.7 115.3L132.1 115.3L132.1 122.7L133.4 122.7L133.4 120.7L134.8 120.7L134.8 121.8L136.1 121.8L136.1 121.3L137.5 121.3L137.5 112.9L138.8 112.9L138.8 119.0L140.2 119.0L140.2 114.9L141.5 114.9L141.5 120.3L142.9 120.3L142.9 116.3L144.2 116.3L144.2 119.8L145.6 119.8L145.6 120.9L146.9 120.9L146.9 117.4L148.3 117.4L148.3 114.3L149.6 114.3L149.6 122.0L151.0 122.0L151.0 118.9L152.3 118.9L152.3 118.8L153.7 118.8L153.7 121.2L155.0 121.2L155.0 120.3L156.4 120.3L156.4 121.7L157.7 121.7L157.7 121.2L159.1 121.2L159.1 120.9L160.4 120.9L160.4 118.9L161.8 118.9L161.8 118.5L163.1 118.5L163.1 121.2L164.5 121.2L164.5 123.4L165.8 123.4L165.8 120.5L167.2 120.5L167.2 118.3L168.5 118.3L168.5 121.4L169.9 121.4L169.9 120.6L171.2 120.6L171.2 121.2L172.6 121.2L172.6 117.3L173.9 117.3L173.9 119.2L175.3 119.2L175.3 122.4L176.6 122.4L176.6 122.0L178.0 122.0L178.0 120.1L179.3 120.1L179.3 119.2L180.7 119.2L180.7 118.6L182.0 118.6L182.0 122.1L183.4 122.1L183.4 121.5L184.7 121.5L184.7 118.2L186.1 118.2L186.1 120.1L187.4 120.1L187.4 120.8L188.8 120.8L188.8 120.6L190.1 120.6L190.1 114.0L191.5 114.0L191.5 120.6L192.8 120.6L192.8 119.1L194.2 119.1L194.2 120.4L195.5 120.4L195.5 120.0L196.9 120.0L196.9 116.3L198.2 116.3L198.2 109.5L199.6 109.5L199.6 120.3L200.9 120.3L200.9 121.3L202.3 121.3L202.3 117.9L203.6 117.9L203.6 121.2L205.0 121.2L205.0 123.7L206.3 123.7L206.3 115.6L207.5 115.6L207.5 149.5L207.5 177.6L206.3 177.6L206.3 176.2L205.0 176.2L205.0 178.4L203.6 178.4L203.6 179.5L202.3 179.5L202.3 178.1L200.9 178.1L200.9 177.8L199.6 177.8L199.6 183.8L198.2 183.8L198.2 179.5L196.9 179.5L196.9 177.3L195.5 177.3L195.5 182.0L194.2 182.0L194.2 178.2L192.8 178.2L192.8 183.3L191.5 183.3L191.5 177.5L190.1 177.5L190.1 181.3L188.8 181.3L188.8 178.6L187.4 178.6L187.4 176.6L186.1 176.6L186.1 184.1L184.7 184.1L184.7 181.7L183.4 181.7L183.4 177.5L182.0 177.5L182.0 183.7L180.7 183.7L180.7 185.1L179.3 185.1L179.3 179.4L178.0 179.4L178.0 186.9L176.6 186.9L176.6 177.7L175.3 177.7L175.3 182.0L173.9 182.0L173.9 181.1L172.6 181.1L172.6 189.5L171.2 189.5L171.2 182.6L169.9 182.6L169.9 177.3L168.5 177.3L168.5 184.9L167.2 184.9L167.2 178.8L165.8 178.8L165.8 179.5L164.5 179.5L164.5 176.5L163.1 176.5L163.1 179.5L161.8 179.5L161.8 181.6L160.4 181.6L160.4 181.1L159.1 181.1L159.1 176.8L157.7 176.8L157.7 180.3L156.4 180.3L156.4 176.3L155.0 176.3L155.0 179.5L153.7 179.5L153.7 179.1L152.3 179.1L152.3 176.9L151.0 176.9L151.0 179.1L149.6 179.1L149.6 177.2L148.3 177.2L148.3 177.1L146.9 177.1L146.9 179.3L145.6 179.3L145.6 177.6L144.2 177.6L144.2 179.2L142.9 179.2L142.9 181.6L141.5 181.6L141.5 181.4L140.2 181.4L140.2 177.9L138.8 177.9L138.8 179.4L137.5 179.4L137.5 180.2L136.1 180.2L136.1 176.0L134.8 176.0L134.8 179.1L133.4 179.1L133.4 179.2L132.1 179.2L132.1 180.5L130.7 180.5L130.7 179.0L129.4 179.0L129.4 180.0L128.0 180.0L128.0 179.0L126.7 179.0L126.7 178.4L125.3 178.4L125.3 180.3L124.0 180.3L124.0 179.8L122.6 179.8L122.6 180.1L121.3 180.1L121.3 177.1L119.9 177.1L119.9 182.3L118.6 182.3L118.6 176.3L117.2 176.3L117.2 181.3L115.9 181.3L115.9 179.8L114.5 179.8L114.5 176.3L113.2 176.3L113.2 183.3L111.8 183.3L111.8 181.0L110.5 181.0L110.5 178.0L109.1 178.0L109.1 177.2L107.8 177.2L107.8 178.8L106.4 178.8L106.4 179.6L105.1 179.6L105.1 178.9L103.7 178.9L103.7 177.8L102.4 177.8L102.4 177.6L101.0 177.6L101.0 182.2L99.7 182.2L99.7 182.4L98.3 182.4L98.3 178.9L97.0 178.9L97.0 177.9L95.6 177.9L95.6 181.6L94.3 181.6L94.3 177.5L92.9 177.5L92.9 182.1L91.6 182.1L91.6 180.2L90.2 180.2L90.2 183.4L88.9 183.4L88.9 178.8L87.5 178.8L87.5 184.0L86.2 184.0L86.2 176.5L84.8 176.5L84.8 179.4L83.5 179.4L83.5 186.3L82.1 186.3L82.1 184.6L80.8 184.6L80.8 177.2L79.4 177.2L79.4 177.7L78.1 177.7L78.1 185.7L76.7 185.7L76.7 181.9L75.4 181.9L75.4 179.4L74.0 179.4L74.0 177.1L72.7 177.1L72.7 184.0L71.3 184.0L71.3 179.6L70.0 179.6L70.0 178.2L68.6 178.2L68.6 177.4L67.3 177.4L67.3 179.5L66.0 179.5L66.0 178.7L64.6 178.7L64.6 180.2L63.3 180.2L63.3 176.9L61.9 176.9L61.9 183.6L60.6 183.6L60.6 180.4L59.2 180.4L59.2 179.8L57.9 179.8L57.9 175.7L56.5 175.7L56.5 177.5L55.2 177.5L55.2 179.2L53.8 179.2L53.8 183.0L52.5 183.0L52.5 178.9L51.1 178.9L51.1 182.0L49.8 182.0L49.8 179.0L48.4 179.0ZM207.5 270.7L207.5 242.7L208.8 242.7L208.8 235.9L210.2 235.9L210.2 239.5L211.5 239.5L211.5 237.0L212.9 237.0L212.9 242.7L214.2 242.7L214.2 238.6L215.6 238.6L215.6 243.1L216.9 243.1L216.9 240.6L218.3 240.6L218.3 239.9L219.6 239.9L219.6 241.5L221.0 241.5L221.0 237.4L222.3 237.4L222.3 240.4L223.7 240.4L223.7 240.2L225.0 240.2L225.0 237.2L226.4 237.2L226.4 243.2L227.7 243.2L227.7 231.3L229.1 231.3L229.1 239.9L230.4 239.9L230.4 241.3L231.8 241.3L231.8 238.4L233.1 238.4L233.1 242.1L234.5 242.1L234.5 231.9L235.8 231.9L235.8 240.3L237.2 240.3L237.2 241.5L238.5 241.5L238.5 238.8L239.9 238.8L239.9 241.1L241.2 241.1L241.2 242.6L242.6 242.6L242.6 239.0L243.9 239.0L243.9 243.8L245.3 243.8L245.3 238.2L246.6 238.2L246.6 242.1L248.0 242.1L248.0 239.8L249.3 239.8L249.3 233.0L250.7 233.0L250.7 240.2L252.0 240.2L252.0 239.7L253.4 239.7L253.4 241.8L254.7 241.8L254.7 245.3L256.1 245.3L256.1 244.0L257.4 244.0L257.4 242.8L258.8 242.8L258.8 240.0L260.1 240.0L260.1 241.1L261.5 241.1L261.5 240.7L262.8 240.7L262.8 236.9L264.2 236.9L264.2 242.9L265.5 242.9L265.5 242.3L266.9 242.3L266.9 239.7L268.2 239.7L268.2 244.2L269.6 244.2L269.6 245.2L271.0 245.2L271.0 241.6L272.3 241.6L272.3 243.2L273.7 243.2L273.7 241.6L275.0 241.6L275.0 242.3L276.4 242.3L276.4 240.2L277.7 240.2L277.7 240.2L279.1 240.2L279.1 242.4L280.4 242.4L280.4 239.9L281.8 239.9L281.8 240.9L283.1 240.9L283.1 242.9L284.5 242.9L284.5 235.9L285.8 235.9L285.8 242.2L287.2 242.2L287.2 242.8L288.5 242.8L288.5 243.2L289.9 243.2L289.9 239.8L291.2 239.8L291.2 237.4L292.6 237.4L292.6 238.6L293.9 238.6L293.9 241.3L295.3 241.3L295.3 242.1L296.6 242.1L296.6 244.6L298.0 244.6L298.0 239.8L299.3 239.8L299.3 240.4L300.7 240.4L300.7 241.6L302.0 241.6L302.0 239.8L303.4 239.8L303.4 241.1L304.7 241.1L304.7 235.9L306.1 235.9L306.1 239.1L307.4 239.1L307.4 242.2L308.8 242.2L308.8 236.8L310.1 236.8L310.1 243.8L311.5 243.8L311.5 240.5L312.8 240.5L312.8 241.3L314.2 241.3L314.2 242.2L315.5 242.2L315.5 243.6L316.9 243.6L316.9 238.6L318.2 238.6L318.2 244.5L319.6 244.5L319.6 240.4L320.9 240.4L320.9 235.7L322.3 235.7L322.3 242.9L323.6 242.9L323.6 242.5L325.0 242.5L325.0 240.1L326.3 240.1L326.3 240.7L327.7 240.7L327.7 239.8L329.0 239.8L329.0 238.2L330.4 238.2L330.4 242.6L331.7 242.6L331.7 241.8L333.1 241.8L333.1 241.9L334.4 241.9L334.4 243.8L335.8 243.8L335.8 237.1L337.1 237.1L337.1 238.6L338.5 238.6L338.5 239.2L339.8 239.2L339.8 244.8L341.2 244.8L341.2 237.8L342.5 237.8L342.5 239.0L343.9 239.0L343.9 240.9L345.2 240.9L345.2 239.0L346.6 239.0L346.6 241.0L347.9 241.0L347.9 242.3L349.3 242.3L349.3 243.2L350.6 243.2L350.6 242.3L352.0 242.3L352.0 243.9L353.3 243.9L353.3 241.7L354.7 241.7L354.7 238.9L356.0 238.9L356.0 239.4L357.4 239.4L357.4 237.8L358.7 237.8L358.7 239.3L360.1 239.3L360.1 242.1L361.4 242.1L361.4 240.4L362.8 240.4L362.8 241.1L364.1 241.1L364.1 238.5L365.5 238.5L365.5 240.6L367.0 240.6L367.0 270.7L367.0 299.8L365.5 299.8L365.5 301.5L364.1 301.5L364.1 302.9L362.8 302.9L362.8 302.0L361.4 302.0L361.4 302.9L360.1 302.9L360.1 298.0L358.7 298.0L358.7 301.5L357.4 301.5L357.4 298.3L356.0 298.3L356.0 300.7L354.7 300.7L354.7 302.0L353.3 302.0L353.3 299.0L352.0 299.0L352.0 299.4L350.6 299.4L350.6 305.8L349.3 305.8L349.3 299.3L347.9 299.3L347.9 303.4L346.6 303.4L346.6 299.8L345.2 299.8L345.2 300.6L343.9 300.6L343.9 298.8L342.5 298.8L342.5 303.0L341.2 303.0L341.2 300.6L339.8 300.6L339.8 300.6L338.5 300.6L338.5 296.4L337.1 296.4L337.1 307.7L335.8 307.7L335.8 302.6L334.4 302.6L334.4 298.9L333.1 298.9L333.1 296.0L331.7 296.0L331.7 298.7L330.4 298.7L330.4 303.2L329.0 303.2L329.0 298.1L327.7 298.1L327.7 303.8L326.3 303.8L326.3 299.0L325.0 299.0L325.0 300.9L323.6 300.9L323.6 302.1L322.3 302.1L322.3 299.8L320.9 299.8L320.9 302.7L319.6 302.7L319.6 300.3L318.2 300.3L318.2 300.2L316.9 300.2L316.9 297.3L315.5 297.3L315.5 301.4L314.2 301.4L314.2 303.7L312.8 303.7L312.8 300.7L311.5 300.7L311.5 306.7L310.1 306.7L310.1 299.6L308.8 299.6L308.8 299.9L307.4 299.9L307.4 302.2L306.1 302.2L306.1 299.4L304.7 299.4L304.7 299.3L303.4 299.3L303.4 297.1L302.0 297.1L302.0 300.2L300.7 300.2L300.7 299.6L299.3 299.6L299.3 299.0L298.0 299.0L298.0 302.5L296.6 302.5L296.6 298.2L295.3 298.2L295.3 298.2L293.9 298.2L293.9 299.5L292.6 299.5L292.6 301.5L291.2 301.5L291.2 303.3L289.9 303.3L289.9 301.5L288.5 301.5L288.5 303.1L287.2 303.1L287.2 303.6L285.8 303.6L285.8 297.4L284.5 297.4L284.5 298.3L283.1 298.3L283.1 299.0L281.8 299.0L281.8 298.3L280.4 298.3L280.4 305.8L279.1 305.8L279.1 304.9L277.7 304.9L277.7 303.9L276.4 303.9L276.4 297.8L275.0 297.8L275.0 304.4L273.7 304.4L273.7 303.2L272.3 303.2L272.3 303.2L271.0 303.2L271.0 299.9L269.6 299.9L269.6 301.2L268.2 301.2L268.2 297.8L266.9 297.8L266.9 302.4L265.5 302.4L265.5 302.0L264.2 302.0L264.2 301.5L262.8 301.5L262.8 302.0L261.5 302.0L261.5 297.5L260.1 297.5L260.1 297.3L258.8 297.3L258.8 298.5L257.4 298.5L257.4 299.8L256.1 299.8L256.1 305.3L254.7 305.3L254.7 298.2L253.4 298.2L253.4 297.3L252.0 297.3L252.0 298.6L250.7 298.6L250.7 304.8L249.3 304.8L249.3 298.0L248.0 298.0L248.0 301.4L246.6 301.4L246.6 299.0L245.3 299.0L245.3 299.6L243.9 299.6L243.9 301.1L242.6 301.1L242.6 302.2L241.2 302.2L241.2 300.3L239.9 300.3L239.9 303.8L238.5 303.8L238.5 302.0L237.2 302.0L237.2 303.5L235.8 303.5L235.8 300.5L234.5 300.5L234.5 307.8L233.1 307.8L233.1 301.8L231.8 301.8L231.8 302.0L230.4 302.0L230.4 301.5L229.1 301.5L229.1 304.7L227.7 304.7L227.7 299.2L226.4 299.2L226.4 299.7L225.0 299.7L225.0 304.2L223.7 304.2L223.7 299.7L222.3 299.7L222.3 302.4L221.0 302.4L221.0 305.8L219.6 305.8L219.6 302.4L218.3 302.4L218.3 299.2L216.9 299.2L216.9 299.3L215.6 299.3L215.6 297.0L214.2 297.0L214.2 304.1L212.9 304.1L212.9 299.0L211.5 299.0L211.5 306.8L210.2 306.8L210.2 301.6L208.8 301.6L208.8 299.3L207.5 299.3ZM367.0 149.5L367.0 120.1L368.4 120.1L368.4 120.1L369.7 120.1L369.7 115.9L371.1 115.9L371.1 122.1L372.4 122.1L372.4 115.9L373.8 115.9L373.8 123.0L375.1 123.0L375.1 121.2L376.5 121.2L376.5 120.9L377.8 120.9L377.8 115.6L379.2 115.6L379.2 119.5L380.5 119.5L380.5 120.2L381.9 120.2L381.9 116.0L383.2 116.0L383.2 121.1L384.6 121.1L384.6 119.8L385.9 119.8L385.9 119.3L387.3 119.3L387.3 117.7L388.6 117.7L388.6 117.7L390.0 117.7L390.0 118.6L391.3 118.6L391.3 120.4L392.7 120.4L392.7 120.5L394.0 120.5L394.0 121.6L395.4 121.6L395.4 116.6L396.7 116.6L396.7 118.5L398.1 118.5L398.1 117.8L399.4 117.8L399.4 121.5L400.8 121.5L400.8 119.9L402.1 119.9L402.1 117.5L403.5 117.5L403.5 119.0L404.8 119.0L404.8 121.8L406.2 121.8L406.2 119.8L407.5 119.8L407.5 116.0L408.9 116.0L408.9 121.0L410.2 121.0L410.2 121.3L411.6 121.3L411.6 120.7L412.9 120.7L412.9 118.1L414.3 118.1L414.3 116.6L415.6 116.6L415.6 121.6L417.0 121.6L417.0 121.6L418.3 121.6L418.3 121.0L419.7 121.0L419.7 120.5L421.0 120.5L421.0 119.4L422.4 119.4L422.4 121.5L423.7 121.5L423.7 120.5L425.1 120.5L425.1 121.3L426.4 121.3L426.4 112.7L427.8 112.7L427.8 117.9L429.1 117.9L429.1 122.0L430.5 122.0L430.5 113.6L431.8 113.6L431.8 122.0L433.2 122.0L433.2 120.2L434.5 120.2L434.5 111.8L435.9 111.8L435.9 117.3L437.2 117.3L437.2 117.9L438.6 117.9L438.6 119.9L439.9 119.9L439.9 121.3L441.3 121.3L441.3 118.6L442.6 118.6L442.6 121.9L444.0 121.9L444.0 121.2L445.3 121.2L445.3 120.2L446.7 120.2L446.7 122.8L448.0 122.8L448.0 120.1L449.4 120.1L449.4 117.3L450.7 117.3L450.7 118.2L452.1 118.2L452.1 119.5L453.4 119.5L453.4 118.7L454.8 118.7L454.8 119.8L456.1 119.8L456.1 121.7L457.5 121.7L457.5 118.9L458.8 118.9L458.8 120.1L460.2 120.1L460.2 117.8L461.5 117.8L461.5 115.5L462.9 115.5L462.9 119.9L464.2 119.9L464.2 119.1L465.6 119.1L465.6 117.7L466.9 117.7L466.9 120.0L468.3 120.0L468.3 121.1L469.6 121.1L469.6 118.0L471.0 118.0L471.0 116.1L472.3 116.1L472.3 117.5L473.7 117.5L473.7 118.2L475.0 118.2L475.0 116.5L476.4 116.5L476.4 118.3L477.7 118.3L477.7 118.6L479.1 118.6L479.1 119.8L480.4 119.8L480.4 120.6L481.8 120.6L481.8 118.7L483.1 118.7L483.1 122.0L484.5 122.0L484.5 120.0L485.8 120.0L485.8 117.4L487.2 117.4L487.2 118.1L488.5 118.1L488.5 118.7L489.9 118.7L489.9 121.0L491.2 121.0L491.2 120.0L492.6 120.0L492.6 119.8L493.9 119.8L493.9 118.8L495.3 118.8L495.3 120.1L496.6 120.1L496.6 118.4L498.0 118.4L498.0 114.9L499.3 114.9L499.3 121.4L500.7 121.4L500.7 118.5L502.0 118.5L502.0 117.4L503.4 117.4L503.4 120.2L504.7 120.2L504.7 119.6L506.1 119.6L506.1 112.7L507.4 112.7L507.4 122.7L508.8 122.7L508.8 119.3L510.1 119.3L510.1 121.5L511.5 121.5L511.5 117.4L512.8 117.4L512.8 114.5L514.2 114.5L514.2 119.4L515.5 119.4L515.5 122.0L516.9 122.0L516.9 119.1L518.2 119.1L518.2 119.3L519.6 119.3L519.6 118.0L520.9 118.0L520.9 119.5L522.3 119.5L522.3 118.6L523.6 118.6L523.6 116.8L525.0 116.8L525.0 119.4L526.5 119.4L526.5 149.5L526.5 176.8L525.0 176.8L525.0 185.3L523.6 185.3L523.6 179.0L522.3 179.0L522.3 178.7L520.9 178.7L520.9 182.3L519.6 182.3L519.6 180.6L518.2 180.6L518.2 179.8L516.9 179.8L516.9 179.3L515.5 179.3L515.5 182.3L514.2 182.3L514.2 175.4L512.8 175.4L512.8 182.7L511.5 182.7L511.5 179.7L510.1 179.7L510.1 179.5L508.8 179.5L508.8 179.4L507.4 179.4L507.4 177.3L506.1 177.3L506.1 179.3L504.7 179.3L504.7 176.6L503.4 176.6L503.4 179.4L502.0 179.4L502.0 177.3L500.7 177.3L500.7 177.9L499.3 177.9L499.3 178.1L498.0 178.1L498.0 179.8L496.6 179.8L496.6 183.0L495.3 183.0L495.3 179.1L493.9 179.1L493.9 181.2L492.6 181.2L492.6 179.7L491.2 179.7L491.2 180.8L489.9 180.8L489.9 177.7L488.5 177.7L488.5 182.3L487.2 182.3L487.2 181.7L485.8 181.7L485.8 183.2L484.5 183.2L484.5 180.6L483.1 180.6L483.1 181.6L481.8 181.6L481.8 180.1L480.4 180.1L480.4 183.2L479.1 183.2L479.1 177.5L477.7 177.5L477.7 181.7L476.4 181.7L476.4 183.4L475.0 183.4L475.0 177.4L473.7 177.4L473.7 178.6L472.3 178.6L472.3 181.5L471.0 181.5L471.0 177.9L469.6 177.9L469.6 177.3L468.3 177.3L468.3 177.0L466.9 177.0L466.9 178.0L465.6 178.0L465.6 180.5L464.2 180.5L464.2 184.9L462.9 184.9L462.9 175.6L461.5 175.6L461.5 175.8L460.2 175.8L460.2 180.3L458.8 180.3L458.8 182.2L457.5 182.2L457.5 177.3L456.1 177.3L456.1 181.6L454.8 181.6L454.8 183.5L453.4 183.5L453.4 182.1L452.1 182.1L452.1 176.5L450.7 176.5L450.7 182.5L449.4 182.5L449.4 184.1L448.0 184.1L448.0 178.7L446.7 178.7L446.7 180.5L445.3 180.5L445.3 180.4L444.0 180.4L444.0 179.1L442.6 179.1L442.6 179.3L441.3 179.3L441.3 178.3L439.9 178.3L439.9 178.0L438.6 178.0L438.6 178.2L437.2 178.2L437.2 181.0L435.9 181.0L435.9 175.0L434.5 175.0L434.5 177.6L433.2 177.6L433.2 179.0L431.8 179.0L431.8 178.1L430.5 178.1L430.5 178.8L429.1 178.8L429.1 178.1L427.8 178.1L427.8 182.5L426.4 182.5L426.4 178.6L425.1 178.6L425.1 182.2L423.7 182.2L423.7 177.2L422.4 177.2L422.4 179.8L421.0 179.8L421.0 178.3L419.7 178.3L419.7 179.3L418.3 179.3L418.3 182.0L417.0 182.0L417.0 182.0L415.6 182.0L415.6 180.4L414.3 180.4L414.3 178.6L412.9 178.6L412.9 185.5L411.6 185.5L411.6 177.9L410.2 177.9L410.2 179.8L408.9 179.8L408.9 179.3L407.5 179.3L407.5 180.3L406.2 180.3L406.2 181.9L404.8 181.9L404.8 181.5L403.5 181.5L403.5 177.2L402.1 177.2L402.1 177.8L400.8 177.8L400.8 178.8L399.4 178.8L399.4 181.8L398.1 181.8L398.1 177.8L396.7 177.8L396.7 179.6L395.4 179.6L395.4 184.4L394.0 184.4L394.0 181.2L392.7 181.2L392.7 177.9L391.3 177.9L391.3 178.1L390.0 178.1L390.0 178.6L388.6 178.6L388.6 180.8L387.3 180.8L387.3 179.0L385.9 179.0L385.9 179.0L384.6 179.0L384.6 175.7L383.2 175.7L383.2 178.9L381.9 178.9L381.9 178.2L380.5 178.2L380.5 176.5L379.2 176.5L379.2 178.6L377.8 178.6L377.8 187.3L376.5 187.3L376.5 177.2L375.1 177.2L375.1 181.4L373.8 181.4L373.8 178.8L372.4 178.8L372.4 180.7L371.1 180.7L371.1 177.8L369.7 177.8L369.7 184.7L368.4 184.7L368.4 178.9L367.0 178.9ZM526.5 270.7L526.5 239.8L527.9 239.8L527.9 239.9L529.2 239.9L529.2 244.1L530.6 244.1L530.6 240.0L531.9 240.0L531.9 239.5L533.3 239.5L533.3 236.0L534.6 236.0L534.6 241.7L536.0 241.7L536.0 233.3L537.3 233.3L537.3 240.7L538.7 240.7L538.7 240.8L540.0 240.8L540.0 236.9L541.4 236.9L541.4 244.0L542.7 244.0L542.7 239.2L544.1 239.2L544.1 239.9L545.4 239.9L545.4 241.7L546.8 241.7L546.8 237.6L548.1 237.6L548.1 241.5L549.5 241.5L549.5 240.9L550.8 240.9L550.8 240.6L552.2 240.6L552.2 238.7L553.5 238.7L553.5 242.4L554.9 242.4L554.9 241.1L556.2 241.1L556.2 241.2L557.6 241.2L557.6 240.4L558.9 240.4L558.9 238.1L560.3 238.1L560.3 241.9L561.6 241.9L561.6 238.1L563.0 238.1L563.0 241.3L564.3 241.3L564.3 240.7L565.7 240.7L565.7 242.0L567.0 242.0L567.0 240.7L568.4 240.7L568.4 233.9L569.7 233.9L569.7 239.7L571.1 239.7L571.1 238.5L572.4 238.5L572.4 241.7L573.8 241.7L573.8 241.8L575.1 241.8L575.1 241.9L576.5 241.9L576.5 240.2L577.8 240.2L577.8 239.9L579.2 239.9L579.2 238.6L580.5 238.6L580.5 243.9L581.9 243.9L581.9 239.2L583.2 239.2L583.2 237.1L584.8 237.1L584.8 270.7L584.8 301.1L583.2 301.1L583.2 303.1L581.9 303.1L581.9 298.4L580.5 298.4L580.5 297.5L579.2 297.5L579.2 301.1L577.8 301.1L577.8 297.7L576.5 297.7L576.5 305.4L575.1 305.4L575.1 301.6L573.8 301.6L573.8 300.3L572.4 300.3L572.4 299.6L571.1 299.6L571.1 300.2L569.7 300.2L569.7 299.5L568.4 299.5L568.4 299.3L567.0 299.3L567.0 301.0L565.7 301.0L565.7 302.8L564.3 302.8L564.3 303.3L563.0 303.3L563.0 299.9L561.6 299.9L561.6 301.7L560.3 301.7L560.3 304.9L558.9 304.9L558.9 302.7L557.6 302.7L557.6 297.5L556.2 297.5L556.2 298.8L554.9 298.8L554.9 298.2L553.5 298.2L553.5 302.6L552.2 302.6L552.2 300.4L550.8 300.4L550.8 301.8L549.5 301.8L549.5 299.0L548.1 299.0L548.1 301.9L546.8 301.9L546.8 301.3L545.4 301.3L545.4 302.0L544.1 302.0L544.1 301.5L542.7 301.5L542.7 301.4L541.4 301.4L541.4 301.4L540.0 301.4L540.0 304.8L538.7 304.8L538.7 302.9L537.3 302.9L537.3 301.7L536.0 301.7L536.0 301.4L534.6 301.4L534.6 305.1L533.3 305.1L533.3 298.9L531.9 298.9L531.9 296.6L530.6 296.6L530.6 299.5L529.2 299.5L529.2 297.6L527.9 297.6L527.9 300.9L526.5 300.9Z" fill="#268ae0"/>
<path d="M48.8 234.3L48.8 149.5M207.5 299.8L207.5 120.4M367.0 299.8L367.0 120.4M526.5 299.8L526.5 120.4" fill="none" stroke="#268ae0" stroke-width="1.3"/>
<g font-size="12" fill="#e6e6e6"><text x="48.5" y="370.2" text-anchor="middle">0</text><text x="128.9" y="370.2" text-anchor="middle">3</text><text x="209.3" y="370.2" text-anchor="middle">6</text><text x="289.6" y="370.2" text-anchor="middle">9</text><text x="370.0" y="370.2" text-anchor="middle">12</text><text x="450.4" y="370.2" text-anchor="middle">15</text><text x="530.8" y="370.2" text-anchor="middle">18</text><text x="44" y="335.6" text-anchor="end">0</text><text x="44" y="275.0" text-anchor="end">0.5</text><text x="44" y="214.4" text-anchor="end">1</text><text x="44" y="153.8" text-anchor="end">1.5</text><text x="44" y="93.2" text-anchor="end">2</text>
<text x="316.5" y="389.3" text-anchor="middle" font-size="13.4">Time (secs)</text>
<text transform="translate(17.6,208.9) rotate(-90)" text-anchor="middle" font-size="13.2">Amplitude</text>
</g>
<path d="M0 424 L0 415.5 A8.5 8.5 0 0 0 8.5 424 Z" fill="#f3f3f3"/><path d="M0 415.5 A8.5 8.5 0 0 0 8.5 424" fill="none" stroke="#cdcdcd" stroke-width="1"/>
<path d="M600 424 L600 415.5 A8.5 8.5 0 0 1 591.5 424 Z" fill="#f3f3f3"/><path d="M600 415.5 A8.5 8.5 0 0 1 591.5 424" fill="none" stroke="#cdcdcd" stroke-width="1"/>
</svg>
</body></html>
